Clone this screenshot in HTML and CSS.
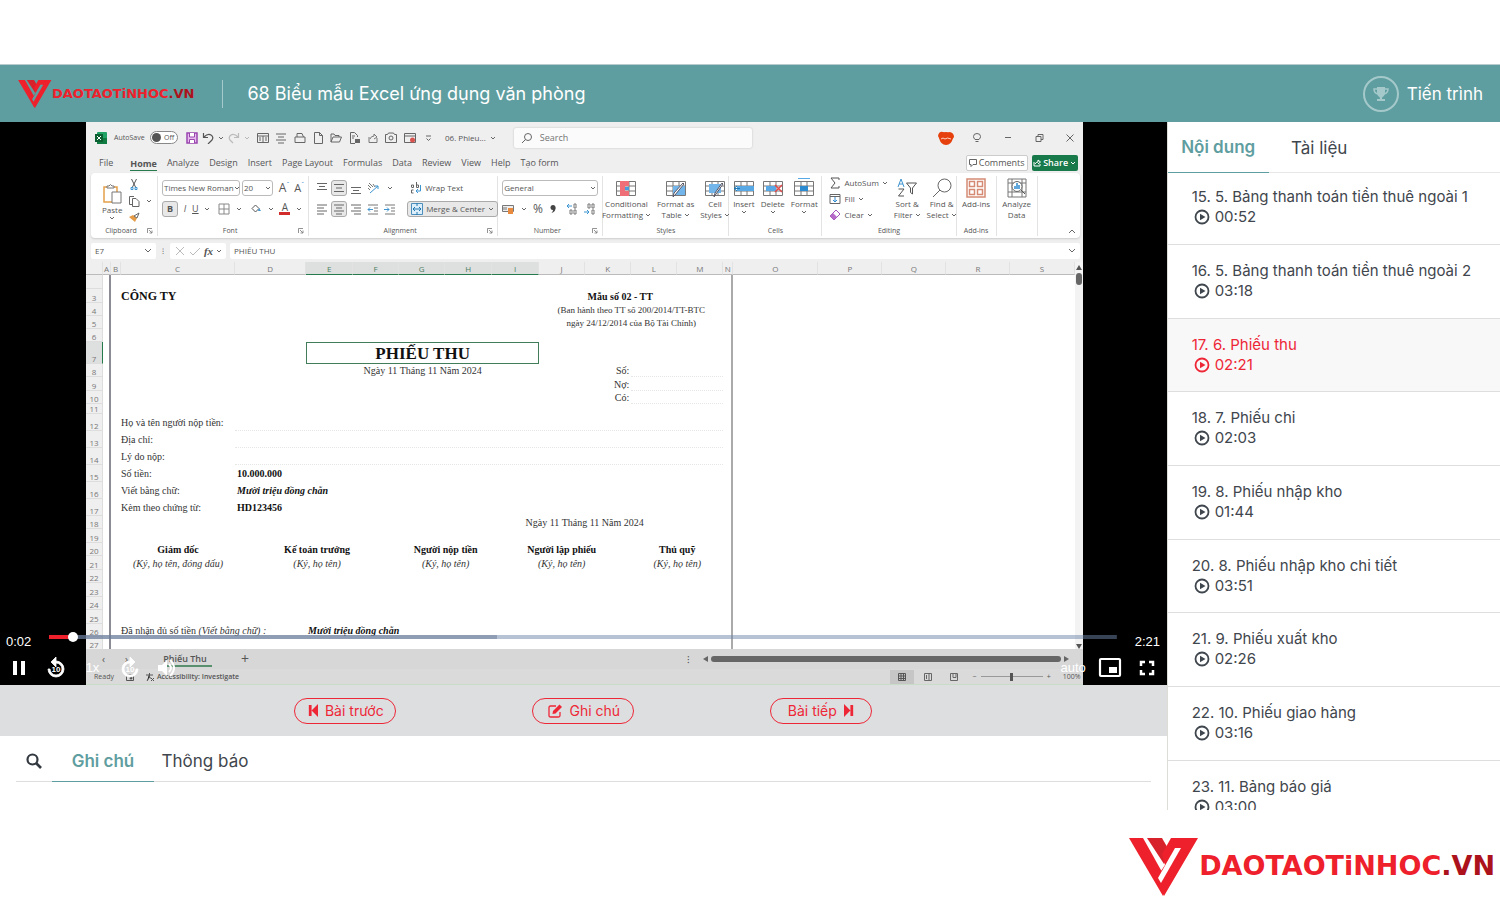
FILE: index.html
```html
<!DOCTYPE html>
<html lang="vi">
<head>
<meta charset="utf-8">
<title>68 Biểu mẫu Excel ứng dụng văn phòng</title>
<link rel="stylesheet" href="styles.css">
</head>
<body>
<svg class="defs" aria-hidden="true">
  <symbol id="mark" viewBox="0 0 70 58">
    <path d="M0 0H14L37 41 34 58Z" fill="#ee202b"/>
    <path d="M18 0H33L41 14 35 26Z" fill="#d8222b"/>
    <path d="M42 0H69L35 58 26 42 36 27 33 16Z" fill="#ee202b"/>
    <path d="M46 10h6L32 45l-3-5Z" fill="var(--slit, #fff)"/>
  </symbol>
  <symbol id="play" viewBox="0 0 16 16"><circle cx="8" cy="8" r="6.5" fill="none" stroke="currentColor" stroke-width="1.8"/><path d="M6 4.8 11.5 8 6 11.2Z" fill="currentColor"/></symbol>
  <symbol id="chev" viewBox="0 0 6 6"><path d="M1 2l2 2 2-2" fill="none" stroke="#666"/></symbol>
  <symbol id="launch" viewBox="0 0 6 6"><path d="M.5 5V.5H5M2 2l3 3M5 2.500V5H2.500" fill="none" stroke="#777" stroke-width=".8"/></symbol>
  <symbol id="lines-c" viewBox="0 0 12 12"><path d="M1 2h10M3 5h6M1 8h10M3 11h6" stroke="#666"/></symbol>
  <symbol id="lines-l" viewBox="0 0 12 12"><path d="M1 2h10M1 5h7M1 8h10M1 11h7" stroke="#666"/></symbol>
  <symbol id="lines-r" viewBox="0 0 12 12"><path d="M1 2h10M4 5h7M1 8h10M4 11h7" stroke="#666"/></symbol>
  <symbol id="lines-3t" viewBox="0 0 12 12"><path d="M1 1.500h10M3 4.500h6M1 7.500h10" stroke="#666"/></symbol>
  <symbol id="lines-3m" viewBox="0 0 12 12"><path d="M1 2.500h10M3 6h6M1 9.500h10" stroke="#666"/></symbol>
  <symbol id="lines-3b" viewBox="0 0 12 12"><path d="M1 5.500h10M3 8.500h6M1 11.500h10" stroke="#666"/></symbol>
  <symbol id="indent-l" viewBox="0 0 12 12"><path d="M1 2h10M7 5h4M7 8h4M1 11h10" stroke="#777"/><path d="M6 6.500H1M3 4.500l-2 2 2 2" fill="none" stroke="#3d94d1"/></symbol>
  <symbol id="indent-r" viewBox="0 0 12 12"><path d="M1 2h10M7 5h4M7 8h4M1 11h10" stroke="#777"/><path d="M0 6.500h5M3 4.500l2 2-2 2" fill="none" stroke="#3d94d1"/></symbol>
  <symbol id="redo10" viewBox="0 0 24 24"><path d="M12 5V1l5 5-5 5V7a6 6 0 1 0 6 6h2a8 8 0 1 1-8-8Z" fill="#fff" stroke="#fff" stroke-width=".8"/><text x="12" y="16" text-anchor="middle" font-family="Liberation Sans" font-size="8" font-weight="700" fill="#fff">10</text></symbol>
  <symbol id="back10" viewBox="0 0 24 24"><path d="M12 5V1L7 6l5 5V7a6 6 0 1 1-6 6H4a8 8 0 1 0 8-8Z" fill="#fff" stroke="#fff" stroke-width=".8"/><text x="12" y="16" text-anchor="middle" font-family="Liberation Sans" font-size="8" font-weight="700" fill="#fff">10</text></symbol>
  <symbol id="skip" viewBox="0 0 12 14"><path d="M0 0 7 7 0 14ZM7 1h3v12H7Z" fill="currentColor"/></symbol>
  <symbol id="grid" viewBox="0 0 20 20"><path d="M.5 3.500h19v14H.5ZM.5 8h19M.5 13h19M7 3.500v14M13 3.500v14" fill="#fff" stroke="#777"/></symbol>
</svg>

<header class="topbar">
  <a class="brand brand-small" href="#"><svg class="brand-mark"><use href="#mark"/></svg><span class="brand-name">DAOTAOTiNHOC<b>.VN</b></span></a>
  <h1 class="course-title">68 Biểu mẫu Excel ứng dụng văn phòng</h1>
  <button class="progress-button">
    <svg class="trophy" viewBox="0 0 36 36"><circle cx="18" cy="18" r="17" fill="none" stroke="#a5c9cb" stroke-width="2"/><path d="M14 11h8v5q0 4-2.500 5-.5.500-.5 2h3v2h-8v-2h3q0-1.500-.5-2-2.500-1-2.500-5Z" fill="#a5c9cb"/><path d="M14 13h-3q0 4 4 5M22 13h3q0 4-4 5" fill="none" stroke="#a5c9cb" stroke-width="1.500"/></svg>
    <span>Tiến trình</span>
  </button>
</header>

<main class="learn">
  <section class="lesson">
    <div class="player">
      <div class="frame">
        <div class="titlebar">
          <svg class="i12" viewBox="0 0 12 12"><rect x="2" width="10" height="12" rx="1" fill="#21a366"/><path d="M2 6h10v6H2Z" fill="#107c41"/><path d="M0 2h8v8H0Z" fill="#0b5f31"/><path d="M2 4l4 4M6 4 2 8" stroke="#fff"/></svg>
          <span class="autosave">AutoSave</span>
          <span class="toggle"><i></i>Off</span>
          <svg class="i12" viewBox="0 0 12 12"><path d="M1 1h10v10H1Z" fill="#e7bdf0" stroke="#9a45ae" stroke-width="1.500"/><path d="M3.500 1v4h5V1M3.500 11V7.500h5V11" fill="#fff" stroke="#9a45ae"/></svg>
          <svg class="i12" viewBox="0 0 12 12"><path d="M1.500 1v4.500H6M2 5q4-4 7-2t1 5l-4 4" fill="none" stroke="#555" stroke-width="1.200"/></svg>
          <svg class="i6"><use href="#chev"/></svg>
          <svg class="i12" viewBox="0 0 12 12"><path d="M10.500 1v4.500H6M10 5Q6 1 3 3t-1 5l3 3" fill="none" stroke="#bbb" stroke-width="1.200"/></svg>
          <svg class="i6 faint"><use href="#chev"/></svg>
          <div class="quick">
            <svg class="i12" viewBox="0 0 12 12"><path d="M.5 1.500h11v9H.5ZM.5 4h11M6 4v6M2 6h2M2 8h2M8 6h2M8 8h2" fill="none" stroke="#666"/></svg>
            <svg class="i12"><use href="#lines-c"/></svg>
            <svg class="i12" viewBox="0 0 12 12"><path d="M3 5V1.500h5L9.500 5M1 5h10v5.500H1Z" fill="none" stroke="#666"/></svg>
            <svg class="i12" viewBox="0 0 12 12"><path d="M2.500.5h5l3 3v8h-8ZM7.500.5v3h3" fill="none" stroke="#666"/></svg>
            <svg class="i12" viewBox="0 0 12 12"><path d="M1 10V2h3l1 1.500h4V5M1 10l2-5h8.500L9.500 10Z" fill="none" stroke="#666"/></svg>
            <svg class="i12" viewBox="0 0 12 12"><path d="M6 11.500H1.500V.5h4l3 3V5M3 4h3M3 6h2" fill="none" stroke="#666"/><path d="M6 7h5v4H6Z" fill="#666"/></svg>
            <svg class="i12" viewBox="0 0 12 12"><path d="M2 5v5.500h8V6M3 7q1-3 4-3V2l3 3-3 2" fill="none" stroke="#777"/></svg>
            <svg class="i12" viewBox="0 0 12 12"><path d="M.5 2.500h2L3.500 1h5l1 1.500h2v8H.5Z" fill="none" stroke="#666"/><circle cx="6" cy="6" r="2" fill="none" stroke="#666"/></svg>
            <svg class="i12" viewBox="0 0 12 12"><path d="M.5 1.500h11v9H.5ZM.5 4h11" fill="none" stroke="#666"/><circle cx="8.500" cy="8" r="2.500" fill="#d9534f"/></svg>
            <svg class="i12" viewBox="0 0 12 12"><path d="M4 4h5M4.500 6.500l2 2 2-2" fill="none" stroke="#666"/></svg>
          </div>
          <span class="docname">06. Phieu...</span><svg class="i6"><use href="#chev"/></svg>
          <label class="finder"><svg class="i12" viewBox="0 0 12 12"><circle cx="7" cy="5" r="3.500" fill="none" stroke="#666"/><path d="M4.500 7.500 1 11" stroke="#666"/></svg><input type="text" placeholder="Search" aria-label="Search"></label>
          <div class="window">
            <svg viewBox="0 0 16 14"><circle cx="8" cy="7.500" r="6.500" fill="#e6400c"/><path d="M0 5Q1 0 5 1l3 1 4-1q4 1 4 5l-2 3H2Z" fill="#e6400c"/><path d="M3 8q2-2 4 0 2-2 6 0" fill="none" stroke="#ffd4c5"/></svg>
            <svg viewBox="0 0 16 14"><path d="M6 8.500Q4.500 7 4.500 5.500a3.500 3 0 0 1 7 0Q11.500 7 10 8.500ZM6.500 10.500h3" fill="none" stroke="#666"/></svg>
            <svg viewBox="0 0 16 14"><path d="M5 6.500h6" stroke="#666"/></svg>
            <svg viewBox="0 0 16 14"><path d="M5 5.500h5v5H5ZM7 5.500v-2h5v5h-2" fill="none" stroke="#666"/></svg>
            <svg viewBox="0 0 16 14"><path d="M4.500 3.500l7 7M11.500 3.500l-7 7" stroke="#666"/></svg>
          </div>
        </div>

        <nav class="menu">
          <span>File</span><span class="menu-on">Home</span><span>Analyze</span><span>Design</span><span>Insert</span><span>Page Layout</span><span>Formulas</span><span>Data</span><span>Review</span><span>View</span><span>Help</span><span>Tạo form</span>
          <button class="comments"><svg class="i8" viewBox="0 0 8 8"><path d="M.5.5h7v5H4l-2 2v-2H.5Z" fill="none" stroke="#666"/></svg>Comments</button>
          <button class="share"><svg class="i8" viewBox="0 0 8 8"><path d="M1 3v4h6V5M2 5q1-2 3-2V1l2.500 2L5 5" fill="none" stroke="#fff"/></svg>Share<svg class="i6" viewBox="0 0 6 6"><path d="M1 2l2 2 2-2" fill="none" stroke="#fff"/></svg></button>
        </nav>

        <div class="ribbon">
          <div class="group">
            <div class="tools">
              <div class="big"><svg class="i20" viewBox="0 0 20 20"><path d="M2 3h13v15H2Z" fill="#fff" stroke="#e5a04a" stroke-width="1.500"/><path d="M5 4V2h2q1.500-3 3 0h2v2Z" fill="#fff" stroke="#777"/><path d="M10 8h9v11h-9Z" fill="#fff" stroke="#777"/></svg><span>Paste</span><svg class="i6"><use href="#chev"/></svg></div>
              <div class="stack">
                <svg class="i12" viewBox="0 0 12 12"><path d="M3.500 0l4 8M8.500 0l-4 8" stroke="#555"/><path d="M3 8.500h2v2H3ZM7 8.500h2v2H7Z" fill="none" stroke="#3d94d1"/></svg>
                <svg class="i12" viewBox="0 0 12 12"><path d="M5 9.500H1.500v-8H6M4.500 3.500H8l3 3v5H4.500Z" fill="none" stroke="#666"/></svg>
                <svg class="i12" viewBox="0 0 12 12"><path d="M1 6l6 5 2-4-4-3Z" fill="#e59a45"/><path d="M6 5l3 2 2-5Z" fill="#fff" stroke="#666"/></svg>
              </div>
              <svg class="i6"><use href="#chev"/></svg>
            </div>
            <div class="caption"><span>Clipboard</span><svg class="i6"><use href="#launch"/></svg></div>
          </div>

          <div class="group">
            <div class="tools rows">
              <div class="line"><span class="box font-name">Times New Roman<svg class="i6"><use href="#chev"/></svg></span><span class="box font-size">20<svg class="i6"><use href="#chev"/></svg></span><span class="glyph push">A<sup>ˆ</sup></span><span class="glyph small">A<sup>ˇ</sup></span></div>
              <div class="line spread"><b class="on">B</b><i>I</i><u>U</u><svg class="i6"><use href="#chev"/></svg><svg class="i12 split" viewBox="0 0 12 12"><path d="M1 1h10v10H1ZM1 6h10M6 1v10" fill="none" stroke="#888"/></svg><svg class="i6"><use href="#chev"/></svg><svg class="i12 split" viewBox="0 0 12 12"><path d="M5.500 2 9 5.500 5.500 9 2 5.500Z" fill="none" stroke="#555"/><path d="M9 5l2 3H8Z" fill="#3d94d1"/></svg><svg class="i6"><use href="#chev"/></svg><span class="ink">A</span><svg class="i6"><use href="#chev"/></svg></div>
            </div>
            <div class="caption"><span>Font</span><svg class="i6"><use href="#launch"/></svg></div>
          </div>

          <div class="group">
            <div class="tools align">
              <div class="aligns">
                <svg class="i12"><use href="#lines-3t"/></svg><span class="on"><svg class="i12"><use href="#lines-3m"/></svg></span><svg class="i12"><use href="#lines-3b"/></svg><svg class="i12" viewBox="0 0 12 12"><path d="M1 3l3 3M2 1l4 4M1 6l2 2M6 2l2 3" stroke="#777"/><path d="M3 11 11 4M8 4h3v3" fill="none" stroke="#3d94d1"/></svg><svg class="i6"><use href="#chev"/></svg>
                <svg class="i12"><use href="#lines-l"/></svg><span class="on"><svg class="i12"><use href="#lines-c"/></svg></span><svg class="i12"><use href="#lines-r"/></svg><svg class="i12"><use href="#indent-l"/></svg><svg class="i12"><use href="#indent-r"/></svg>
              </div>
              <div class="wraps">
                <div class="wrap"><svg class="i12" viewBox="0 0 12 12"><path d="M1.500 5V3h2v2.500H1.500M6.500 0v5.500h2V3h-2M3.500 8H1.500v3h2" fill="none" stroke="#666"/><path d="M10.500 3v6H6M8 7 6 9l2 2" fill="none" stroke="#3d94d1"/></svg>Wrap Text</div>
                <div class="wrap on"><svg class="i12" viewBox="0 0 12 12"><path d="M.5.500h11v11H.5Z" fill="#dbeefa" stroke="#4c8fbd"/><path d="M2 6h8M4 4 2 6l2 2M8 4l2 2-2 2M6 0v3M6 9v3" fill="none" stroke="#2478b0"/></svg>Merge &amp; Center<svg class="i6"><use href="#chev"/></svg></div>
              </div>
            </div>
            <div class="caption"><span>Alignment</span><svg class="i6"><use href="#launch"/></svg></div>
          </div>

          <div class="group">
            <div class="tools rows">
              <div class="line"><span class="box wide">General<svg class="i6"><use href="#chev"/></svg></span></div>
              <div class="line spread"><svg class="i12" viewBox="0 0 12 12"><path d="M.5 2.500h11v6H.5Z" fill="#eee" stroke="#777"/><path d="M6 5h5v6H6Z" fill="#e98b3f"/><path d="M2 4v3M4 4v3" stroke="#777"/></svg><svg class="i6"><use href="#chev"/></svg><span class="glyph">%</span><svg class="i8" viewBox="0 0 8 8"><circle cx="4" cy="2.500" r="2.500" fill="#444"/><path d="M6.500 2.500Q6.500 7 2.500 8 4.500 6 4 4Z" fill="#444"/></svg><svg class="i12 split" viewBox="0 0 12 12"><path d="M6 3H1M3 1 1 3l2 2" fill="none" stroke="#3d94d1"/><path d="M8 1h2v4H8ZM4 7h2v4H4ZM8 7h2v4H8Z" fill="none" stroke="#777"/></svg><svg class="i12" viewBox="0 0 12 12"><path d="M0 9h5M3 7l2 2-2 2" fill="none" stroke="#3d94d1"/><path d="M4 1h2v4H4ZM8 1h2v4H8ZM8 7h2v4H8Z" fill="none" stroke="#777"/></svg></div>
            </div>
            <div class="caption"><span>Number</span><svg class="i6"><use href="#launch"/></svg></div>
          </div>

          <div class="group">
            <div class="tools bigs">
              <div class="big"><svg class="i20" viewBox="0 0 20 20"><use href="#grid"/><path d="M4 3h9v5H4ZM4 13h9v5H4Z" fill="#ef6f78"/><path d="M4 8h5v5H4Z" fill="#ef6f78"/><path d="M9 9h4v3H9Z" fill="#4a9bdc"/></svg><span>Conditional<br>Formatting<svg class="i6"><use href="#chev"/></svg></span></div>
              <div class="big"><svg class="i20" viewBox="0 0 20 20"><use href="#grid"/><path d="M7 8h12v9H7Z" fill="#71b5ea"/><path d="M18 6 9 17l-2 2 1-4 9-10Z" fill="#fff" stroke="#556"/></svg><span>Format as<br>Table<svg class="i6"><use href="#chev"/></svg></span></div>
              <div class="big"><svg class="i20" viewBox="0 0 20 20"><use href="#grid"/><path d="M4 6h12v9H4Z" fill="#71b5ea"/><path d="M18 6 11 16l-2 3 1-4 7-10Z" fill="#fff" stroke="#556"/></svg><span>Cell<br>Styles<svg class="i6"><use href="#chev"/></svg></span></div>
            </div>
            <div class="caption"><span>Styles</span></div>
          </div>

          <div class="group">
            <div class="tools bigs">
              <div class="big"><svg class="i20" viewBox="0 0 20 20"><use href="#grid"/><path d="M3 8h17v5H3Z" fill="#57a8e4"/><path d="M6 10.500H0M3 8l-3 2.500L3 13" fill="none" stroke="#2478b0"/></svg><span>Insert</span><svg class="i6"><use href="#chev"/></svg></div>
              <div class="big"><svg class="i20" viewBox="0 0 20 20"><use href="#grid"/><path d="M3 8h10v5H3Z" fill="#57a8e4"/><path d="M12 7l7 7M19 7l-7 7" stroke="#e04b4b" stroke-width="1.500"/></svg><span>Delete</span><svg class="i6"><use href="#chev"/></svg></div>
              <div class="big"><svg class="i20" viewBox="0 0 20 20"><use href="#grid"/><path d="M6 8h8v5H6Z" fill="#2c8ad0"/><path d="M4 .500h12" stroke="#57a8e4"/></svg><span>Format</span><svg class="i6"><use href="#chev"/></svg></div>
            </div>
            <div class="caption"><span>Cells</span></div>
          </div>

          <div class="group">
            <div class="tools editing">
              <div class="edits">
                <div><svg class="i12" viewBox="0 0 12 12"><path d="M10 3V1H2l4 5-4 5h8V9" fill="none" stroke="#555"/></svg>AutoSum<svg class="i6 end"><use href="#chev"/></svg></div>
                <div><svg class="i12" viewBox="0 0 12 12"><path d="M1 1.500h10v9H1ZM1 3.500h10" fill="none" stroke="#666"/><path d="M6 4v5M4 7l2 2 2-2" fill="none" stroke="#2c8ad0"/></svg>Fill<svg class="i6"><use href="#chev"/></svg></div>
                <div><svg class="i12" viewBox="0 0 12 12"><path d="M7 1l4 4-6 6-4-4Z" fill="#fff" stroke="#a354b8"/><path d="M4 4l4 4-3 3-4-4Z" fill="#b66bc8"/></svg>Clear<svg class="i6"><use href="#chev"/></svg></div>
              </div>
              <div class="big"><svg class="i20" viewBox="0 0 20 20"><path d="M1 9 4 1l3 8M2 6h4" fill="none" stroke="#3d94d1"/><path d="M1.500 11H7l-5.500 7H7" fill="none" stroke="#555"/><path d="M9.500 5h10l-4 5v6l-2-1.500V10Z" fill="none" stroke="#555"/></svg><span>Sort &amp;<br>Filter<svg class="i6"><use href="#chev"/></svg></span></div>
              <div class="big"><svg class="i20" viewBox="0 0 20 20"><circle cx="12.500" cy="7.500" r="6.500" fill="none" stroke="#666"/><path d="M8 12 1 19" stroke="#666"/></svg><span>Find &amp;<br>Select<svg class="i6"><use href="#chev"/></svg></span></div>
            </div>
            <div class="caption"><span>Editing</span></div>
          </div>

          <div class="group">
            <div class="tools bigs"><div class="big"><svg class="i20" viewBox="0 0 20 20"><path d="M1 1h18v18H1ZM3.500 3.500h5v5h-5ZM11.500 3.500h5v5h-5ZM3.500 11.500h5v5h-5ZM11.500 11.500h5v5h-5Z" fill="#fff" stroke="#d58a74" stroke-width="1.500"/></svg><span>Add-ins</span></div></div>
            <div class="caption"><span>Add-ins</span></div>
          </div>
          <div class="group">
            <div class="tools bigs"><div class="big"><svg class="i20" viewBox="0 0 20 20"><path d="M1 1h18v18H1ZM1 5h18M1 14h18M5 1v18M15 1v18" fill="#fff" stroke="#777"/><circle cx="10" cy="8.500" r="5" fill="#fff" stroke="#666"/><path d="M8 11V8M10 11V5M12 11V7" stroke="#2c8ad0" stroke-width="1.500"/><path d="M14 12l4 4" stroke="#555"/></svg><span>Analyze<br>Data</span></div></div>
            <div class="caption"></div>
          </div>
          <div class="group last"><svg class="i8" viewBox="0 0 8 8"><path d="M1 5l3-3 3 3" fill="none" stroke="#666"/></svg></div>
        </div>

        <div class="formula">
          <span class="name-box">E7<svg class="i8" viewBox="0 0 8 8"><path d="M1 2l3 3 3-3" fill="none" stroke="#666"/></svg></span>
          <span class="dots">⁝</span>
          <span class="fx"><svg class="i12" viewBox="0 0 12 12"><path d="M2 2l8 8M10 2l-8 8" stroke="#bbb"/></svg><svg class="i12" viewBox="0 0 12 12"><path d="M1 7l3 3 7-7" fill="none" stroke="#bbb"/></svg><em>fx</em><svg class="i6"><use href="#chev"/></svg></span>
          <span class="formula-text">PHIẾU THU<svg class="i8" viewBox="0 0 8 8"><path d="M1 2l3 3 3-3" fill="none" stroke="#666"/></svg></span>
        </div>

        <div class="sheet">
          <table class="cells">
            <colgroup><col class="w17"><col class="w8"><col class="w10"><col class="w114"><col class="w71"><col class="w47"><col class="w46"><col class="w46"><col class="w47"><col class="w47"><col class="w46"><col class="w46"><col class="w46"><col class="w46"><col class="w10"><col class="w85"><col class="w64"><col class="w64"><col class="w64"><col class="w64"></colgroup>
            <thead><tr><th></th><th>A</th><th>B</th><th>C</th><th>D</th><th class="sel">E</th><th class="sel">F</th><th class="sel">G</th><th class="sel">H</th><th class="sel">I</th><th>J</th><th>K</th><th>L</th><th>M</th><th>N</th><th>O</th><th>P</th><th>Q</th><th>R</th><th>S</th></tr></thead>
            <tbody>
              <tr class="r14"><th></th><td class="edge"></td><td></td><td colspan="12" class="page"></td><td colspan="5"></td></tr>
              <tr class="r14"><th>3</th><td class="edge"></td><td></td><td colspan="7" class="company">CÔNG TY</td><td colspan="4" class="mid form-no">Mẫu số 02 - TT</td><td class="page"></td><td colspan="5"></td></tr>
              <tr class="r13"><th>4</th><td class="edge"></td><td></td><td colspan="7"></td><td colspan="4" class="mid decree">(Ban hành theo TT số 200/2014/TT-BTC</td><td class="page"></td><td colspan="5"></td></tr>
              <tr class="r13"><th>5</th><td class="edge"></td><td></td><td colspan="7"></td><td colspan="4" class="mid decree">ngày 24/12/2014 của Bộ Tài Chính)</td><td class="page"></td><td colspan="5"></td></tr>
              <tr class="r13"><th>6</th><td class="edge"></td><td></td><td colspan="12" class="page"></td><td colspan="5"></td></tr>
              <tr class="r22"><th class="sel">7</th><td class="edge"></td><td></td><td colspan="2"></td><td colspan="5" class="mid title">PHIẾU THU</td><td colspan="5" class="page"></td><td colspan="5"></td></tr>
              <tr class="r13"><th>8</th><td class="edge"></td><td></td><td colspan="2"></td><td colspan="5" class="mid">Ngày 11 Tháng 11 Năm 2024</td><td colspan="2" class="right">Số:</td><td colspan="2" class="fill"></td><td class="page"></td><td colspan="5"></td></tr>
              <tr class="r14"><th>9</th><td class="edge"></td><td></td><td colspan="7"></td><td colspan="2" class="right">Nợ:</td><td colspan="2" class="fill"></td><td class="page"></td><td colspan="5"></td></tr>
              <tr class="r13"><th>10</th><td class="edge"></td><td></td><td colspan="7"></td><td colspan="2" class="right">Có:</td><td colspan="2" class="fill"></td><td class="page"></td><td colspan="5"></td></tr>
              <tr class="r10"><th>11</th><td class="edge"></td><td></td><td colspan="12" class="page"></td><td colspan="5"></td></tr>
              <tr class="r17"><th>12</th><td class="edge"></td><td></td><td>Họ và tên người nộp tiền:</td><td colspan="10" class="fill"></td><td class="page"></td><td colspan="5"></td></tr>
              <tr class="r17"><th>13</th><td class="edge"></td><td></td><td>Địa chỉ:</td><td colspan="10" class="fill"></td><td class="page"></td><td colspan="5"></td></tr>
              <tr class="r17"><th>14</th><td class="edge"></td><td></td><td>Lý do nộp:</td><td colspan="10" class="fill"></td><td class="page"></td><td colspan="5"></td></tr>
              <tr class="r17"><th>15</th><td class="edge"></td><td></td><td>Số tiền:</td><td colspan="10" class="value">10.000.000</td><td class="page"></td><td colspan="5"></td></tr>
              <tr class="r17"><th>16</th><td class="edge"></td><td></td><td>Viết bằng chữ:</td><td colspan="10" class="value"><em>Mười triệu đồng chẵn</em></td><td class="page"></td><td colspan="5"></td></tr>
              <tr class="r17"><th>17</th><td class="edge"></td><td></td><td>Kèm theo chứng từ:</td><td colspan="10" class="value">HD123456</td><td class="page"></td><td colspan="5"></td></tr>
              <tr class="r13"><th>18</th><td class="edge"></td><td></td><td colspan="6"></td><td colspan="4" class="mid">Ngày 11 Tháng 11 Năm 2024</td><td colspan="2" class="page"></td><td colspan="5"></td></tr>
              <tr class="r14"><th>19</th><td class="edge"></td><td></td><td colspan="12" class="page"></td><td colspan="5"></td></tr>
              <tr class="r13 signer"><th>20</th><td class="edge"></td><td></td><td>Giám đốc</td><td colspan="3">Kế toán trưởng</td><td colspan="2">Người nộp tiền</td><td colspan="3">Người lập phiếu</td><td colspan="2">Thủ quỹ</td><td class="page"></td><td colspan="5"></td></tr>
              <tr class="r14 signature"><th>21</th><td class="edge"></td><td></td><td>(Ký, họ tên, đóng dấu)</td><td colspan="3">(Ký, họ tên)</td><td colspan="2">(Ký, họ tên)</td><td colspan="3">(Ký, họ tên)</td><td colspan="2">(Ký, họ tên)</td><td class="page"></td><td colspan="5"></td></tr>
              <tr class="r13"><th>22</th><td class="edge"></td><td></td><td colspan="12" class="page"></td><td colspan="5"></td></tr>
              <tr class="r14"><th>23</th><td class="edge"></td><td></td><td colspan="12" class="page"></td><td colspan="5"></td></tr>
              <tr class="r13"><th>24</th><td class="edge"></td><td></td><td colspan="12" class="page"></td><td colspan="5"></td></tr>
              <tr class="r14"><th>25</th><td class="edge"></td><td></td><td colspan="12" class="page"></td><td colspan="5"></td></tr>
              <tr class="r13"><th>26</th><td class="edge"></td><td></td><td colspan="2">Đã nhận đủ số tiền <em>(Viết bằng chữ) :</em></td><td colspan="9" class="value"><em>Mười triệu đồng chẵn</em></td><td class="page"></td><td colspan="5"></td></tr>
              <tr class="r13"><th>27</th><td class="edge"></td><td></td><td colspan="12" class="page"></td><td colspan="5"></td></tr>
            </tbody>
          </table>
          <div class="vscroll"><i class="up"></i><i class="vthumb"></i><i class="down"></i></div>
        </div>

        <div class="sheet-tabs"><span>‹</span><span>›</span><span class="sheet-name">Phiếu Thu</span><span class="add">+</span><span class="end">⁝</span><i class="left"></i><i class="hthumb"></i><i class="rightward"></i></div>
        <div class="status">
          <span>Ready</span>
          <svg class="i8" viewBox="0 0 8 8"><path d="M.5 1.500h7v6h-7ZM.5 3h7" fill="none" stroke="#555"/><circle cx="5" cy="5" r="1.500" fill="#555"/></svg>
          <span class="access"><svg class="i8" viewBox="0 0 8 8"><path d="M0 2h7M3.500 0v4L1 8M3.500 4l2 2M5 5l3 3M8 5 5 8" stroke="#555"/></svg>Accessibility: Investigate</span>
          <span class="view view-on end"><svg class="i8" viewBox="0 0 8 8"><path d="M.5.5h7v7h-7ZM.5 3h7M.5 5.500h7M3 .5v7M5.500.5v7" fill="none" stroke="#555"/></svg></span>
          <span class="view"><svg class="i8" viewBox="0 0 8 8"><path d="M.5.5h7v7h-7ZM2.500 2v4M4 2h2M4 4h2M4 6h2" fill="none" stroke="#666"/></svg></span>
          <span class="view"><svg class="i8" viewBox="0 0 8 8"><path d="M.5.5h7v7h-7ZM3 .5v4h3v-4" fill="none" stroke="#666"/></svg></span>
          <span>−</span><span class="zoom"><i></i></span><span>+</span><span>100%</span>
        </div>
      </div>

      <div class="overlay">
        <div class="seek"><span class="time">0:02</span><input type="range" min="0" max="1000" value="18" aria-label="Tua video"><span class="time">2:21</span></div>
        <div class="controls">
          <button aria-label="Tạm dừng"><svg viewBox="0 0 24 24"><path d="M6 5h4v14H6ZM14 5h4v14h-4Z" fill="#fff"/></svg></button>
          <button aria-label="Lùi 10 giây"><svg><use href="#back10"/></svg></button>
          <button>1x</button>
          <button aria-label="Tới 10 giây"><svg><use href="#redo10"/></svg></button>
          <button aria-label="Âm lượng"><svg viewBox="0 0 24 24"><path d="M3 9v6h4l5 5V4L7 9Z" fill="#fff"/><path d="M14 8q4 4 0 8M15 4q8 8 0 16" fill="none" stroke="#fff" stroke-width="2"/></svg></button>
          <button class="end">auto</button>
          <button aria-label="Hình trong hình"><svg viewBox="0 0 24 24"><rect x="2" y="3" width="20" height="17" rx="1" fill="none" stroke="#fff" stroke-width="2.200"/><path d="M11 11h8v6h-8Z" fill="#fff"/></svg></button>
          <button aria-label="Toàn màn hình"><svg viewBox="0 0 24 24"><path d="M6 10V6h4M14 6h4v4M18 14v4h-4M10 18H6v-4" fill="none" stroke="#fff" stroke-width="2.500"/></svg></button>
        </div>
      </div>
    </div>

    <div class="lesson-nav">
      <button class="pill"><svg class="skip flip"><use href="#skip"/></svg>Bài trước</button>
      <button class="pill"><svg class="edit" viewBox="0 0 16 16"><path d="M13 9v3.500q0 1.500-1.500 1.500h-8Q2 14 2 12.500v-8Q2 3 3.500 3H9" fill="none" stroke="currentColor" stroke-width="1.300"/><path d="M6 8l6.500-6.500 2.500 2.500L8.500 10.500 5.500 11Z" fill="currentColor"/></svg>Ghi chú</button>
      <button class="pill">Bài tiếp<svg class="skip"><use href="#skip"/></svg></button>
    </div>

    <nav class="note-tabs">
      <button class="search-button" aria-label="Tìm kiếm"><svg viewBox="0 0 16 16"><circle cx="6.500" cy="6.500" r="5" fill="none" stroke="#333940" stroke-width="2.200"/><path d="M10 10l5 5" stroke="#333940" stroke-width="2.600"/></svg></button>
      <button class="tab tab-on">Ghi chú</button>
      <button class="tab">Thông báo</button>
    </nav>
  </section>

  <aside class="outline">
    <nav class="outline-tabs"><button class="tab tab-on">Nội dung</button><button class="tab">Tài liệu</button></nav>
    <ol class="lessons">
      <li><a href="#">15. 5. Bảng thanh toán tiền thuê ngoài 1<span><svg><use href="#play"/></svg>00:52</span></a></li>
      <li><a href="#">16. 5. Bảng thanh toán tiền thuê ngoài 2<span><svg><use href="#play"/></svg>03:18</span></a></li>
      <li class="current"><a href="#">17. 6. Phiếu thu<span><svg><use href="#play"/></svg>02:21</span></a></li>
      <li><a href="#">18. 7. Phiếu chi<span><svg><use href="#play"/></svg>02:03</span></a></li>
      <li><a href="#">19. 8. Phiếu nhập kho<span><svg><use href="#play"/></svg>01:44</span></a></li>
      <li><a href="#">20. 8. Phiếu nhập kho chi tiết<span><svg><use href="#play"/></svg>03:51</span></a></li>
      <li><a href="#">21. 9. Phiếu xuất kho<span><svg><use href="#play"/></svg>02:26</span></a></li>
      <li><a href="#">22. 10. Phiếu giao hàng<span><svg><use href="#play"/></svg>03:16</span></a></li>
      <li><a href="#">23. 11. Bảng báo giá<span><svg><use href="#play"/></svg>03:00</span></a></li>
    </ol>
  </aside>
</main>

<footer class="footer"><a class="brand brand-large" href="#"><svg class="brand-mark"><use href="#mark"/></svg><span class="brand-name">DAOTAOTiNHOC<b>.VN</b></span></a></footer>
</body>
</html>
```
FILE: styles.css
```css
* { box-sizing: border-box; }
body { margin: 0; height: 100vh; padding-top: 64px; display: flex; flex-direction: column; overflow: hidden; background: #fff; color: #3f464d; font-family: Inter, sans-serif; }
button { border: 0; padding: 0; background: none; color: inherit; font: inherit; }
a { color: inherit; text-decoration: none; }
svg { display: block; flex: none; }
.defs { display: none; }
.end { margin-left: auto; }

/* Header and footer */
.topbar { flex: none; height: 58px; display: flex; align-items: center; padding: 0 17px 0 18px; border-top: 1px solid #b9cccd; background: #5f9ea0; color: #fff; }
.brand { display: flex; align-items: center; color: #ee202b; font-family: "DejaVu Sans", sans-serif; font-weight: 700; }
.brand b { color: #ac121b; }
.brand-small { --slit: #5f9ea0; font-size: 13px; }
.brand-small .brand-mark { width: 34px; height: 28px; }
.brand-large { font-size: 27px; line-height: 1; }
.brand-large .brand-mark { width: 70px; height: 58px; }
.brand-large .brand-name { padding-bottom: 4px; }
.course-title { margin: 0 0 0 28px; padding-left: 24px; border-left: 1px solid #a5c9cb; font-size: 18px; font-weight: 400; line-height: 28px; }
.progress-button { display: flex; align-items: center; gap: 8px; margin-left: auto; font-size: 17px; }
.trophy { width: 36px; height: 36px; }
.footer { flex: none; height: 90px; display: flex; justify-content: flex-end; align-items: flex-start; padding: 28px 5px 0 0; }

/* Page columns */
.learn { flex: 1; min-height: 0; display: grid; grid-template-columns: 7fr 2fr; }
.lesson { min-width: 0; }
.outline { min-width: 0; min-height: 0; overflow: hidden; display: flex; flex-direction: column; border-left: 1px solid #ddddd8; }
.tab { font-size: 17px; }
.tab-on { color: #5f9ea0; font-weight: 600; border-bottom: 1px solid #5f9ea0; }
.outline-tabs { flex: none; height: 51px; display: flex; border-bottom: 1px solid #e5e7e8; }
.outline-tabs .tab { width: 101px; height: 51px; }
.lessons { list-style: none; margin: 0; padding: 0; }
.lessons li { height: 74px; padding: 16px 24px 0; border-bottom: 1px solid #dedede; font-size: 15px; line-height: 20px; white-space: nowrap; }
.lessons li:nth-child(3n) { height: 73px; }
.lessons li:first-child { height: 72px; padding-top: 14px; }
.lessons .current { background: #f8f8f8; color: #ee2737; }
.lessons span { display: flex; align-items: center; gap: 5px; padding-left: 2px; }
.lessons svg { width: 16px; height: 16px; }

/* Below the video */
.lesson-nav { height: 51px; display: flex; justify-content: center; align-items: center; gap: 136px; background: #dddee0; }
.pill { width: 102px; height: 26px; display: flex; align-items: center; justify-content: center; gap: 7px; border: 1px solid #ee2737; border-radius: 13px; color: #ee2737; font-size: 14px; white-space: nowrap; }
.skip { width: 11px; height: 13px; }
.flip { transform: scaleX(-1); }
.edit { width: 16px; height: 16px; }
.note-tabs { height: 46px; margin: 0 16px; display: flex; border-bottom: 1px solid #dedede; }
.search-button { width: 36px; padding: 5px 0 0 10px; }
.search-button svg { width: 16px; height: 16px; }
.note-tabs .tab { width: 102px; height: 46px; padding-top: 4px; }

/* Video */
.player { position: relative; height: 563px; display: flex; padding: 0 84px 0 86px; background: #000; }
.frame { flex: 1; min-width: 0; display: flex; flex-direction: column; overflow: hidden; background: #efeff0; color: #555; font: 8px/10px "Open Sans", sans-serif; white-space: nowrap; }
.i6 { width: 6px; height: 6px; }
.i8 { width: 8px; height: 8px; }
.i12 { width: 12px; height: 12px; }
.i20 { width: 20px; height: 20px; }
.faint { opacity: .4; }
.titlebar { flex: none; height: 31px; display: flex; align-items: center; gap: 4px; padding: 0 5px 0 9px; }
.autosave { width: 35px; padding-left: 3px; font-size: 7px; }
.toggle { width: 28px; height: 13px; display: flex; align-items: center; gap: 3px; padding-left: 1px; margin-right: 4px; border: 1px solid #888; border-radius: 7px; font-size: 7px; background: #fff; }
.toggle i { width: 9px; height: 9px; border-radius: 50%; background: #555; }
.quick { width: 183px; display: flex; justify-content: space-around; }
.docname { margin-left: 4px; }
.finder { width: 238px; height: 20px; margin-left: 14px; padding-left: 7px; display: flex; align-items: center; gap: 7px; border-radius: 2px; background: #fbfbfb; box-shadow: 0 0 2px #bbb; }
.finder input { border: 0; padding: 0; background: none; font: inherit; font-size: 9px; }
.window { width: 140px; display: flex; justify-content: space-between; margin-left: auto; }
.window svg { width: 16px; height: 14px; }
.menu { flex: none; height: 20px; display: flex; align-items: center; gap: 10px; padding: 0 5px 0 13px; font-size: 9px; }
.menu-on { padding-top: 1px; margin-left: 7px; font-weight: 700; border-bottom: 1px solid #267a4b; line-height: 13px; }
.comments, .share { height: 16px; display: flex; align-items: center; justify-content: center; gap: 2px; width: 62px; border: 1px solid #ccc; border-radius: 2px; background: #fff; }
.comments { margin-left: auto; margin-right: -6px; }
.share { width: 46px; border: 0; background: #18794a; color: #fff; font-weight: 600; }
.ribbon { flex: none; height: 65px; margin: 0 3px 0 5px; display: grid; grid-template-columns: 67fr 151fr 189fr 105fr 126fr 93fr 134fr 40fr 41fr 42fr; border-radius: 4px; background: #fff; box-shadow: 0 1px 2px #ccc; }
.group { min-width: 0; display: flex; flex-direction: column; margin: 3px 0; padding: 0 4px; border-right: 1px solid #e3e3e3; }
.group.last { border: 0; align-items: flex-end; justify-content: flex-end; }
.tools { height: 50px; display: flex; gap: 4px; }
.caption { display: flex; align-items: center; font-size: 7px; }
.caption span { flex: 1; text-align: center; }
.big { display: flex; flex-direction: column; align-items: center; padding-top: 2px; text-align: center; }
.big span { line-height: 11px; }
.big span .i6 { display: inline-block; margin-left: 2px; }
.bigs { justify-content: center; gap: 6px; }
.group:first-child .tools { align-items: center; padding-left: 7px; gap: 6px; }
.stack { display: flex; flex-direction: column; gap: 4px; }
.rows { flex-direction: column; padding-top: 4px; gap: 5px; }
.line { height: 16px; display: flex; align-items: center; gap: 2px; }
.spread { justify-content: space-between; padding-right: 2px; }
.box { height: 16px; display: flex; align-items: center; justify-content: space-between; padding: 0 1px; border: 1px solid #bbb; border-radius: 3px; }
.font-name { width: 78px; }
.font-size { width: 32px; }
.wide { flex: 1; }
.glyph { font-size: 12px; line-height: 14px; color: #555; }
.glyph sup { font-size: 7px; line-height: 0; color: #3d94d1; }
.push { margin-left: 4px; }
.small { font-size: 11px; margin-left: 3px; }
.on { height: 16px; min-width: 16px; display: flex; align-items: center; justify-content: center; border: 1px solid #aaa; border-radius: 3px; background: #e8e8e8; }
.line b, .line i, .line u { font-size: 9px; }
.split { margin-left: 2px; }
.ink { width: 11px; border-bottom: 3px solid #d12b2b; font-size: 10px; line-height: 9px; text-align: center; }
.align { padding-top: 4px; gap: 9px; }
.aligns { display: grid; grid-template-columns: repeat(5, 17px); grid-auto-rows: 16px; gap: 5px 0; align-content: start; align-items: center; justify-items: center; }
.wraps { flex: 1; display: flex; flex-direction: column; gap: 5px; }
.wrap { height: 16px; display: flex; align-items: center; justify-content: flex-start; gap: 3px; padding: 0 3px; }
.wrap .i6 { margin-left: auto; }
.editing { gap: 6px; padding-left: 3px; }
.edits { width: 59px; display: flex; flex-direction: column; gap: 4px; padding-top: 1px; }
.edits div { display: flex; align-items: center; gap: 3px; height: 12px; }
.editing .big { flex: 1; }
.formula { flex: none; height: 16px; margin: 5px 3px 3px 5px; display: flex; gap: 4px; }
.formula > span { display: flex; align-items: center; justify-content: space-between; padding: 0 4px; border-radius: 2px; background: #fff; }
.formula .dots { background: none; padding: 0 2px; }
.name-box { width: 65px; }
.fx { width: 56px; }
.fx em { font: italic 700 11px/12px "Liberation Serif", serif; }
.formula-text { flex: 1; }

/* Worksheet */
.sheet { flex: 1; min-height: 0; overflow: hidden; display: flex; align-items: stretch; background: #fff; }
.cells { flex: 1; align-self: flex-start; width: 100%; table-layout: fixed; border-collapse: separate; border-spacing: 0; color: #333; font: 10px/10px "Liberation Serif", serif; }
.cells th, .cells td { padding: 0; vertical-align: bottom; text-align: left; }
.cells th { border: 0 solid #ddd; background: #efeff0; color: #777; font: 8px/10px "Open Sans", sans-serif; text-align: center; }
.cells thead th { height: 13px; border-width: 0 1px 1px 0; border-color: #e2e2e2 #e2e2e2 #bbb; }
.cells tbody th { border-width: 0 1px 1px 0; line-height: 9px; }
.cells thead .sel { background: #dedfdf; color: #4c8062; border-bottom: 1px solid #267a4b; }
.cells tbody .sel { background: #dedfdf; border-right-color: #267a4b; }
.w8 { width: 8px; } .w10 { width: 10px; } .w17 { width: 17px; } .w46 { width: 46px; } .w47 { width: 47px; } .w64 { width: 64px; } .w71 { width: 71px; } .w85 { width: 85px; } .w114 { width: 114px; }
.r10 { height: 10px; } .r13 { height: 13px; } .r14 { height: 14px; } .r17 { height: 17px; } .r22 { height: 22px; }
.cells .r13 td, .cells .r14 td { padding-bottom: 1px; }
.cells .r17 td { padding-bottom: 3px; }
.cells .edge { border-right: 2px solid #8c8c94; }
.cells .page { border-right: 2px solid #aaa; }
.cells .company { color: #111; font-size: 12px; font-weight: 700; line-height: 12px; }
.cells .mid, .cells .signer td, .cells .signature td { text-align: center; }
.cells .form-no { padding-right: 22px; color: #111; font-weight: 700; }
.cells .decree { font-size: 9px; }
.cells .title { border: 1px solid #417d59; color: #111; font-size: 17px; font-weight: 700; line-height: 18px; }
.cells .right { padding-right: 2px; text-align: right; }
.cells .fill { border-bottom: 1px dotted #e6e6e6; }
.cells .value { padding-left: 2px; color: #111; font-weight: 700; }
.cells .signer td { color: #111; font-weight: 700; }
.cells .signature td { font-style: italic; }
.vscroll { flex: none; width: 8px; display: flex; flex-direction: column; align-items: center; padding: 3px 0 0; background: #f3f3f3; }
.up, .down { border: 3px solid transparent; border-bottom: 5px solid #555; border-top: 0; }
.down { margin-top: auto; border-top: 5px solid #555; border-bottom: 0; }
.vthumb { width: 6px; height: 12px; margin-top: 3px; border-radius: 3px; background: #666; }
.sheet-tabs { flex: none; height: 20px; display: flex; align-items: center; gap: 5px; padding: 0 14px 0 16px; background: #d7d7d7; font-size: 10px; }
.sheet-tabs > span:nth-child(2) { margin-left: 15px; }
.sheet-name { width: 54px; height: 16px; margin-left: 25px; padding-top: 3px; border-bottom: 2px solid #58906e; text-align: center; font-size: 9px; font-weight: 600; }
.add { margin-left: 24px; font-size: 14px; }
.left, .rightward { border: 3px solid transparent; border-right: 5px solid #666; border-left: 0; }
.rightward { border-left: 5px solid #666; border-right: 0; }
.left { margin-left: 8px; }
.hthumb { width: 350px; height: 6px; margin: 0 -2px; border-radius: 3px; background: #666; }
.status { flex: none; height: 16px; display: flex; align-items: center; gap: 12px; padding: 0 2px 0 8px; background: #dadada; border-bottom: 1px solid #c8dcc8; font-size: 7px; }
.access { display: flex; align-items: center; gap: 3px; font-weight: 600; }
.view { width: 14px; height: 14px; display: flex; align-items: center; justify-content: center; }
.view-on { width: 24px; background: #c6c6c6; margin-right: -5px; }
.view.end { margin-left: auto; }
.zoom { width: 62px; height: 8px; display: flex; justify-content: center; margin: 0 -8px; background: linear-gradient(#999, #999) center / 100% 1px no-repeat; }
.zoom i { width: 3px; background: #555; }

/* Player controls lie over the frame */
.overlay { position: absolute; left: 0; right: 0; bottom: 0; color: #fff; font: 13px/16px "Liberation Sans", sans-serif; }
.seek { display: flex; padding: 0 7px 0 6px; gap: 18px; }
.time { width: 25px; padding-top: 4px; }
.seek input { flex: 1; min-width: 0; height: 10px; margin: 2px 0 0; appearance: none; background: linear-gradient(90deg, #ee202b 2%, rgba(105, 125, 155, .75) 2%, rgba(105, 125, 155, .75) 42%, rgba(110, 135, 170, .5) 42%) center / 100% 4px no-repeat; }
.seek input::-webkit-slider-thumb { appearance: none; width: 10px; height: 10px; border-radius: 50%; background: #fff; }
.controls { height: 35px; display: flex; align-items: center; padding: 0 1px 0 0; }
.controls button { width: 37px; height: 24px; display: flex; align-items: center; justify-content: center; }
.controls svg { width: 24px; height: 24px; }
```
